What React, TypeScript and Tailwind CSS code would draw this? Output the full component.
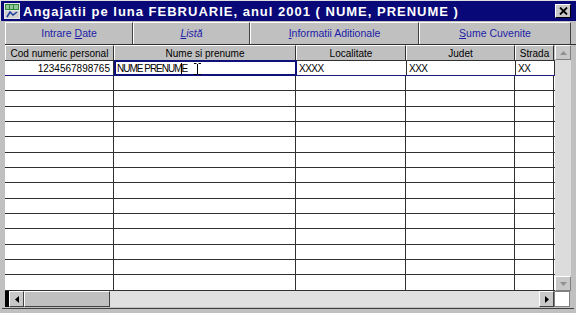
import React from "react";

const cols = [109, 182, 110, 109, 39];
const rows = 15;

function Cell({ w, children, className = "" }: { w: number; children?: React.ReactNode; className?: string }) {
  return (
    <div
      className={"shrink-0 border-r border-[#303030] h-full overflow-hidden whitespace-nowrap " + className}
      style={{ width: w }}
    >
      {children}
    </div>
  );
}

export default function App() {
  return (
    <div
      className="w-[576px] h-[313px] bg-[#c0c0c0] overflow-hidden flex flex-col text-[10px] text-black"
      style={{ fontFamily: '"Liberation Sans", Arial, sans-serif' }}
    >
      {/* Title bar */}
      <div className="h-[21px] bg-[#080878] flex items-center pl-[3px] pr-[5px] shrink-0 border-t border-l border-[#e0e0e0]">
        <svg width="16" height="16" viewBox="0 0 16 16" className="shrink-0">
          <rect x="0" y="0" width="16" height="16" fill="#e8e8e8" />
          <rect x="1" y="1" width="14" height="6" fill="#2a8a3a" />
          <path d="M2 3h3M6 3h3M10 3h4M2 5h3M6 5h3M10 5h4" stroke="#fff" strokeWidth="1" />
          <rect x="1" y="8" width="14" height="7" fill="#d0d0d0" />
          <path d="M3 14 L6 9 L9 12 L13 9" stroke="#1a3aa0" strokeWidth="1.5" fill="none" />
        </svg>
        <span className="ml-[3px] text-white font-bold text-[13px] leading-none tracking-[1px]">
          Angajatii pe luna FEBRUARIE, anul 2001 ( NUME, PRENUME )
        </span>
        <div className="ml-auto w-[16px] h-[14px] bg-[#c8c8c8] border-t border-l border-white border-r border-b border-r-black border-b-black flex items-center justify-center">
          <svg width="9" height="8" viewBox="0 0 9 8">
            <path d="M1 0.5 L8 7.5 M8 0.5 L1 7.5" stroke="#000" strokeWidth="1.8" />
          </svg>
        </div>
      </div>

      {/* Tabs */}
      <div className="h-[22px] flex pl-[5px] pr-[5px] shrink-0 mt-[1px] text-[#1c1ca8] text-[10.5px]">
        <div className="w-[128px] border-t border-l border-white border-r border-r-[#404040] flex items-center justify-center">
          <span>Intrare <span className="underline">D</span>ate</span>
        </div>
        <div className="w-[117px] border-t border-l border-white border-r border-r-[#404040] flex items-center justify-center italic">
          <span><span className="underline">L</span>istă</span>
        </div>
        <div className="w-[169px] border-t border-l border-white border-r border-r-[#404040] flex items-center justify-center">
          <span><span className="underline">I</span>nformatii Aditionale</span>
        </div>
        <div className="flex-1 border-t border-l border-white border-r border-r-[#404040] flex items-center justify-center">
          <span><span className="underline">S</span>ume Cuvenite</span>
        </div>
      </div>

      {/* Grid + vertical scroll */}
      <div className="flex ml-[5px] shrink-0 border-t border-[#303030]">
        <div className="flex flex-col">
          <div className="flex h-[16px] border-b border-[#303030] bg-[#c0c0c0]">
            {["Cod numeric personal", "Nume si prenume", "Localitate", "Judet", "Strada"].map((t, i) => (
              <Cell key={t} w={cols[i]} className="flex items-center justify-center border-l border-l-white border-t border-t-white">
                {t}
              </Cell>
            ))}
          </div>
          {Array.from({ length: rows }).map((_, r) => (
            <div
              key={r}
              className={
                "flex bg-white border-b " +
                (r === 0 ? "border-[#181880] h-[15px]" : "border-[#303030] " + (r % 3 === 2 ? "h-[16px]" : "h-[15px]"))
              }
            >
              {r === 0 ? (
                <>
                  <Cell w={cols[0]} className="flex items-center justify-end pr-[3px]">1234567898765</Cell>
                  <div
                    className="shrink-0 h-[16px] -mt-[1px] border-2 border-[#10107a] relative flex items-center pl-[1px] bg-white"
                    style={{ width: cols[1] + 1 }}
                  >
                    <span className="tracking-[-1px]">NUME PRENUME</span>
                    <div className="absolute left-[65px] top-[1px] w-[1px] h-[11px] bg-black" />
                    <svg width="7" height="12" viewBox="0 0 7 12" className="absolute left-[78px] top-[1px]">
                      <path d="M0 0.5 H2.5 M4.5 0.5 H7 M3.5 1 V11 M0 11.5 H2.5 M4.5 11.5 H7" stroke="#000" strokeWidth="1" />
                    </svg>
                  </div>
                  <Cell w={cols[2]} className="flex items-center pl-[2px] tracking-[-0.5px]">XXXX</Cell>
                  <Cell w={cols[3]} className="flex items-center pl-[2px] tracking-[-0.5px]">XXX</Cell>
                  <Cell w={cols[4]} className="flex items-center pl-[2px] tracking-[-0.5px]">XX</Cell>
                </>
              ) : (
                cols.map((w, i) => <Cell key={i} w={w} />)
              )}
            </div>
          ))}
        </div>
        {/* vertical scrollbar */}
        <div className="w-[16px] bg-[#dcdcdc] flex flex-col justify-between">
          <div className="h-[15px] bg-[#c8c8c8] border-t border-l border-white border-r border-b border-r-[#808080] border-b-[#808080] flex items-center justify-center">
            <svg width="7" height="4" viewBox="0 0 7 4"><path d="M0 4 L3.5 0 L7 4 Z" fill="#909090" /></svg>
          </div>
          <div className="h-[15px] bg-[#c8c8c8] border-t border-l border-white border-r border-b border-r-[#808080] border-b-[#808080] flex items-center justify-center">
            <svg width="7" height="4" viewBox="0 0 7 4"><path d="M0 0 L3.5 4 L7 0 Z" fill="#909090" /></svg>
          </div>
        </div>
      </div>

      {/* Horizontal scrollbar */}
      <div className="flex ml-[5px] h-[16px] shrink-0">
        <div className="w-[549px] flex bg-[#e0e0e0]">
          <div className="w-[4px] bg-black" />
          <div className="w-[15px] bg-[#c8c8c8] border-t border-l border-white border-r border-b border-r-[#404040] border-b-[#404040] flex items-center justify-center">
            <svg width="4" height="7" viewBox="0 0 4 7"><path d="M4 0 L0 3.5 L4 7 Z" fill="#000" /></svg>
          </div>
          <div className="w-[86px] bg-[#c0c0c0] border-t border-l border-white border-r border-b border-r-[#404040] border-b-[#404040]" />
          <div className="flex-1" />
          <div className="w-[15px] bg-[#c8c8c8] border-t border-l border-white border-r border-b border-r-[#404040] border-b-[#404040] flex items-center justify-center">
            <svg width="4" height="7" viewBox="0 0 4 7"><path d="M0 0 L4 3.5 L0 7 Z" fill="#000" /></svg>
          </div>
        </div>
        <div className="w-[16px] bg-white border border-[#808080]" />
      </div>
      <div className="h-[1px] mt-[1px] bg-[#404040] ml-[2px] mr-[2px]" />
    </div>
  );
}
